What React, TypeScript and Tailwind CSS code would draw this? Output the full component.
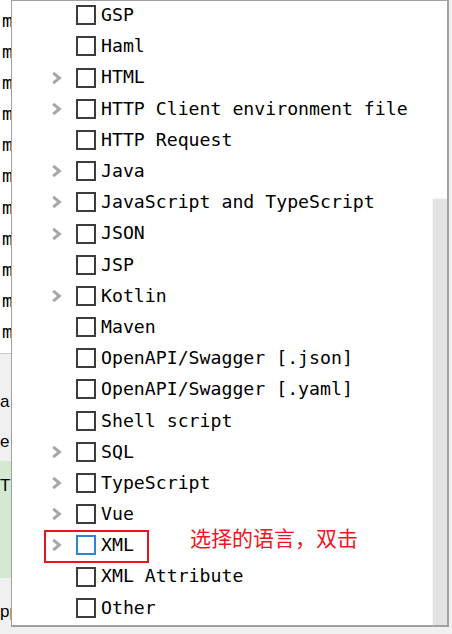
import React from 'react';

type Row = { label: string; expandable: boolean };

const rows: Row[] = [
  { label: 'GSP', expandable: false },
  { label: 'Haml', expandable: false },
  { label: 'HTML', expandable: true },
  { label: 'HTTP Client environment file', expandable: true },
  { label: 'HTTP Request', expandable: false },
  { label: 'Java', expandable: true },
  { label: 'JavaScript and TypeScript', expandable: true },
  { label: 'JSON', expandable: true },
  { label: 'JSP', expandable: false },
  { label: 'Kotlin', expandable: true },
  { label: 'Maven', expandable: false },
  { label: 'OpenAPI/Swagger [.json]', expandable: false },
  { label: 'OpenAPI/Swagger [.yaml]', expandable: false },
  { label: 'Shell script', expandable: false },
  { label: 'SQL', expandable: true },
  { label: 'TypeScript', expandable: true },
  { label: 'Vue', expandable: true },
  { label: 'XML', expandable: true },
  { label: 'XML Attribute', expandable: false },
  { label: 'Other', expandable: false },
];

const mono = { fontFamily: '"DejaVu Sans Mono", "Liberation Mono", monospace' };
const sans = { fontFamily: '"Liberation Sans", Arial, sans-serif' };

function Chevron() {
  return (
    <svg width="11" height="14" viewBox="0 0 11 14">
      <path d="M2.2 1.8 L8.4 7 L2.2 12.2" fill="none" stroke="#a6a6a6" strokeWidth="3" />
    </svg>
  );
}

function LanguageRow({ row }: { row: Row }) {
  const highlighted = row.label === 'XML';
  return (
    <div className="relative flex items-center h-[31.2px] shrink-0">
      <div className="w-[39px] shrink-0" />
      <div className="w-[25px] shrink-0 flex items-center">{row.expandable && <Chevron />}</div>
      <div
        className={`w-[20px] h-[20px] shrink-0 bg-white border-2 ${
          highlighted ? 'border-[#2a84d8]' : 'border-[#3c3c3c]'
        }`}
      />
      <span className="ml-[5px] text-[18.2px] text-black whitespace-pre leading-none" style={mono}>
        {row.label}
      </span>
      {highlighted && (
        <>
          {/* annotation box + note */}
          <div className="absolute left-[32px] top-0 w-[105px] h-[33px] border-2 border-[#e6161e]" />
          <span
            className="absolute left-[178px] top-[-3px] text-[21px] leading-none text-[#f0141e] whitespace-nowrap"
            style={{ fontFamily: '"Noto Sans CJK SC", sans-serif' }}
          >
            选择的语言，双击
          </span>
        </>
      )}
    </div>
  );
}

export default function App() {
  return (
    <div className="w-[452px] h-[634px] bg-[#f0f0f0] flex overflow-hidden">
      {/* editor behind the popup */}
      <div className="w-[11px] shrink-0 flex flex-col overflow-hidden">
        <div className="h-[354px] shrink-0 bg-white pt-[5px] border-b border-[#c8c8c8]">
          {Array.from({ length: 11 }).map((_, i) => (
            <div key={i} className="h-[31.1px] leading-[31.1px] text-[18px] pl-[2px] text-black" style={mono}>
              m
            </div>
          ))}
        </div>
        <div className="h-[107px] shrink-0 pt-[30px] text-[17px] leading-[40px] text-black" style={sans}>
          <div className="-mt-[2px]">a</div>
          <div>e</div>
        </div>
        <div className="h-[117px] shrink-0 bg-[#d3e9d1] pt-[12px] text-[17px] text-black" style={sans}>
          T
        </div>
        <div className="pt-[22px] text-[17px] leading-[24px] text-black whitespace-nowrap" style={sans}>
          pp
        </div>
      </div>

      {/* popup */}
      <div className="w-[438px] h-[627px] shrink-0 bg-white border-l border-t border-r-2 border-b-2 border-[#a0a0a0] flex overflow-hidden">
        <div className="flex-1 flex flex-col -mt-[1.4px]">
          {rows.map((r) => (
            <LanguageRow key={r.label} row={r} />
          ))}
        </div>
        <div className="w-[15px] shrink-0 flex flex-col">
          <div className="h-[197px] shrink-0" />
          <div className="flex-1 bg-[#e3e3e3] border-l border-t border-[#f7f7f7]" />
        </div>
      </div>
    </div>
  );
}
